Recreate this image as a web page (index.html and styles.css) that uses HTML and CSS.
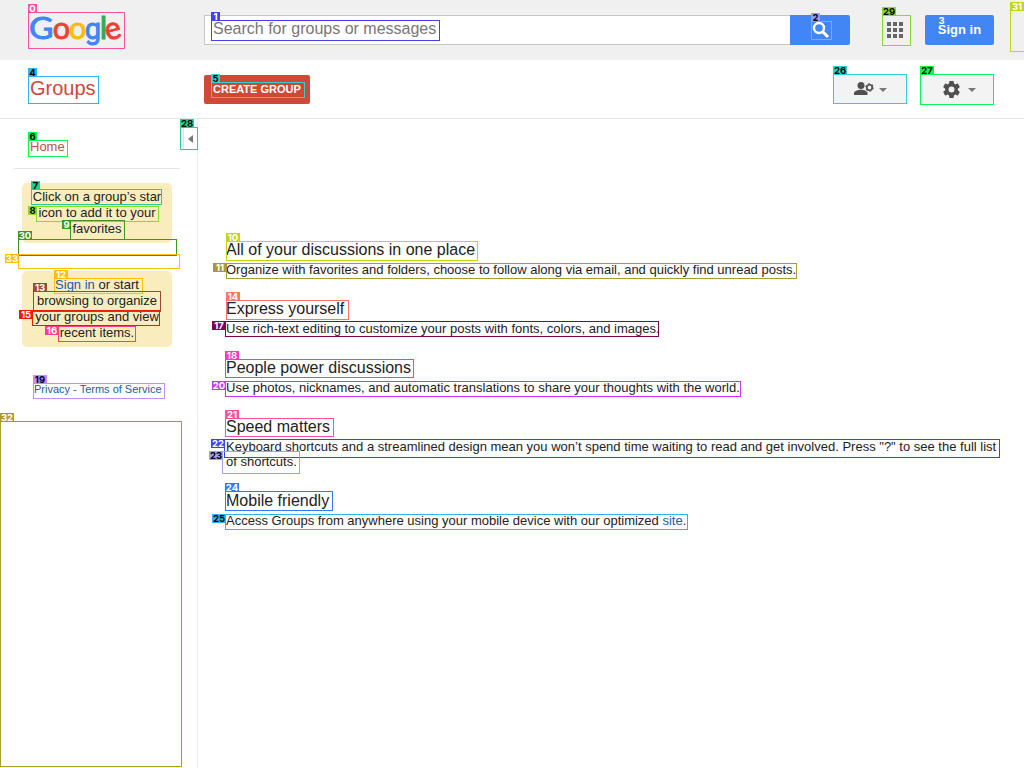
FILE: index.html
```html
<!DOCTYPE html>
<html lang="en">
<head>
<meta charset="utf-8">
<title>Google Groups</title>
<link rel="stylesheet" href="styles.css">
</head>
<body>
<header class="header">
  <a class="logo"><svg width="96" height="36" viewBox="0 0 96 36"><g class="logo-text"><text x="0" y="26" fill="#4285f4" stroke="#4285f4" textLength="24.5" lengthAdjust="spacingAndGlyphs">G</text><text x="23.800" y="26" fill="#ea4335" stroke="#ea4335" textLength="17.400" lengthAdjust="spacingAndGlyphs">o</text><text x="39.900" y="26" fill="#fbbc05" stroke="#fbbc05" textLength="17.400" lengthAdjust="spacingAndGlyphs">o</text><text class="logo-g" x="55.800" y="26" fill="#4285f4" stroke="#4285f4">g</text><text x="70.800" y="26" fill="#34a853" stroke="#34a853">l</text><text x="76" y="26" fill="#ea4335" stroke="#ea4335" textLength="16" lengthAdjust="spacingAndGlyphs" transform="rotate(-14 84 18)">e</text></g></svg></a>
  <div class="search"><div class="search-field">Search for groups or messages</div><div class="search-button"><svg width="18" height="18" viewBox="0 0 18 18"><circle cx="7" cy="7" r="5" fill="none" stroke="#fff" stroke-width="2.4"/><path d="M10.5 10.5 16 16" stroke="#fff" stroke-width="3"/></svg></div></div>
  <svg class="apps" width="16" height="16" viewBox="0 0 16 16"><path fill="#666" d="M0 0h4v4H0zM6 0h4v4H6zM12 0h4v4h-4zM0 6h4v4H0zM6 6h4v4H6zM12 6h4v4h-4zM0 12h4v4H0zM6 12h4v4H6zM12 12h4v4h-4z"/></svg>
  <a class="sign-in">Sign in</a>
</header>
<div class="toolbar">
  <div class="product">Groups</div>
  <div class="create">CREATE GROUP</div>
  <div class="tool members"><svg width="20" height="14" viewBox="0 0 20 14"><circle cx="7" cy="3.5" r="3.5" fill="#505050"/><path d="M0 13v-2c0-2 4-3.3 7-3.3s6.500 1.300 6.500 3.300v2z" fill="#505050"/><circle cx="15.500" cy="5.500" r="2.700" fill="none" stroke="#505050" stroke-width="1.600"/><circle cx="15.500" cy="5.500" r="3.600" fill="none" stroke="#505050" stroke-width="1.200" stroke-dasharray="1.900 1.870"/></svg><i class="caret"></i></div>
  <div class="tool settings"><svg width="17" height="17" viewBox="2 2 20 20"><path fill="#505050" d="M19.430 12.980c.04-.32.07-.64.07-.98s-.03-.66-.07-.98l2.110-1.650c.19-.15.24-.42.12-.64l-2-3.460c-.12-.22-.39-.3-.61-.22l-2.490 1c-.52-.4-1.080-.73-1.690-.98l-.38-2.650C14.460 2.180 14.250 2 14 2h-4c-.25 0-.46.18-.49.42l-.38 2.650c-.61.25-1.170.59-1.690.98l-2.490-1c-.23-.09-.49 0-.61.22l-2 3.460c-.13.22-.07.49.12.64l2.110 1.650c-.04.32-.07.65-.07.98s.03.66.07.98l-2.110 1.650c-.19.15-.24.42-.12.64l2 3.460c.12.22.39.3.61.22l2.490-1c.52.4 1.080.73 1.690.98l.38 2.650c.03.24.24.42.49.42h4c.25 0 .46-.18.49-.42l.38-2.650c.61-.25 1.170-.59 1.690-.98l2.490 1c.23.09.49 0 .61-.22l2-3.460c.12-.22.07-.49-.12-.64zM12 15.500a3.500 3.500 0 1 1 0-7 3.500 3.500 0 0 1 0 7z"/></svg><i class="caret"></i></div>
</div>
<div class="body">
  <nav class="sidebar">
    <div class="collapse"><svg width="5" height="8" viewBox="0 0 5 8"><path d="M5 0v8L0 4z" fill="#777"/></svg></div>
    <a class="home">Home</a>
    <div class="tip">Click on a group’s star<br>icon to add it to your<br>favorites</div>
    <div class="tip tip-recent"><a>Sign in</a> or start<br>browsing to organize<br>your groups and view<br>recent items.</div>
    <div class="legal"><a>Privacy</a> - <a>Terms of Service</a></div>
  </nav>
  <main class="content">
    <section><h2>All of your discussions in one place</h2><p>Organize with favorites and folders, choose to follow along via email, and quickly find unread posts.</p></section>
    <section><h2>Express yourself</h2><p>Use rich-text editing to customize your posts with fonts, colors, and images.</p></section>
    <section><h2>People power discussions</h2><p>Use photos, nicknames, and automatic translations to share your thoughts with the world.</p></section>
    <section><h2>Speed matters</h2><p>Keyboard shortcuts and a streamlined design mean you won’t spend time waiting to read and get involved. Press "?" to see the full list<br>of shortcuts.</p></section>
    <section><h2>Mobile friendly</h2><p>Access Groups from anywhere using your mobile device with our optimized <a>site</a>.</p></section>
  </main>
</div>
<div class="marks">
  <div class="mark m0"><b>0</b></div>
  <div class="mark m1"><b>1</b></div>
  <div class="mark m2 dark"><b>2</b></div>
  <div class="mark m3"><b>3</b></div>
  <div class="mark m4 dark"><b>4</b></div>
  <div class="mark m5 dark"><b>5</b></div>
  <div class="mark m6 dark"><b>6</b></div>
  <div class="mark m7 dark"><b>7</b></div>
  <div class="mark m8 dark side"><b>8</b></div>
  <div class="mark m9 side"><b>9</b></div>
  <div class="mark two m10"><b>10</b></div>
  <div class="mark two m11 side"><b>11</b></div>
  <div class="mark two m12"><b>12</b></div>
  <div class="mark two m13"><b>13</b></div>
  <div class="mark two m14"><b>14</b></div>
  <div class="mark two m15 side"><b>15</b></div>
  <div class="mark two m16 side"><b>16</b></div>
  <div class="mark two m17 side"><b>17</b></div>
  <div class="mark two m18"><b>18</b></div>
  <div class="mark two m19 dark"><b>19</b></div>
  <div class="mark two m20 side"><b>20</b></div>
  <div class="mark two m21"><b>21</b></div>
  <div class="mark two m22 side"><b>22</b></div>
  <div class="mark two m23 dark side"><b>23</b></div>
  <div class="mark two m24"><b>24</b></div>
  <div class="mark two m25 dark side"><b>25</b></div>
  <div class="mark two m26 dark"><b>26</b></div>
  <div class="mark two m27 dark"><b>27</b></div>
  <div class="mark two m28 dark"><b>28</b></div>
  <div class="mark two m29 dark"><b>29</b></div>
  <div class="mark two m30"><b>30</b></div>
  <div class="mark two m31"><b>31</b></div>
  <div class="mark two m32"><b>32</b></div>
  <div class="mark two m33 side"><b>33</b></div>
</div>
</body>
</html>
```
FILE: styles.css
```css
* { box-sizing: border-box; }
body { margin: 0; width: 1024px; height: 768px; overflow: hidden; position: relative; background: #fff; color: #222; font: 13px/15px "Liberation Sans", Arial, sans-serif; display: flex; flex-direction: column; }
a { color: #245aa8; }
svg { display: block; flex: none; overflow: visible; }

.header { height: 60px; flex: none; background: #f0f0f0; display: flex; align-items: flex-start; padding-top: 15px; }
.logo { margin: -2px 79px 0 29px; }
.logo-text { font-family: Lato, sans-serif; font-size: 31.5px; font-weight: 400; stroke-width: .9px; }
.logo-g { font-family: Roboto, sans-serif; font-size: 29px; }
.search { display: flex; width: 646px; height: 30px; }
.search-field { width: 586px; background: #fff; border: 1px solid #c6c6c6; border-right: 0; padding: 0 8px; font-size: 16px; line-height: 25px; color: #777; }
.search-button { width: 60px; background: #4285f4; border-radius: 0 2px 2px 0; padding: 6px 0 0 22px; }
.apps { margin: 7px 22px 0 37px; }
.sign-in { width: 69px; height: 30px; background: #4285f4; border-radius: 2px; color: #fff; font-weight: bold; line-height: 29px; text-align: center; }

.toolbar { height: 59px; flex: none; display: flex; align-items: flex-start; border-bottom: 1px solid #e8e8e8; padding: 14px 30px 0; }
.product { width: 174px; color: #c8493c; font-size: 20px; line-height: 28px; }
.create { width: 106px; height: 29px; margin: 1px 523px 0 0; background: #d14836; border-radius: 2px; color: #fff; font-weight: bold; font-size: 11px; line-height: 28px; padding-left: 9px; }
.tool { width: 74px; height: 30px; background: #f3f3f3; display: flex; align-items: center; }
.members { padding-left: 21px; gap: 5px; margin-right: 13px; }
.settings { padding-left: 23px; gap: 8px; height: 31px; }
.caret { border: 4px solid transparent; border-top-color: #777; border-bottom: 0; margin-top: 1px; }

.body { flex: 1; display: flex; }
.sidebar { width: 198px; border-right: 1px solid #ebebeb; position: relative; display: flex; flex-direction: column; }
.collapse { position: absolute; right: 0; top: 8px; width: 14px; height: 23px; border: 1px solid #e5e5e5; border-right: 0; padding: 7px 0 0 4px; }
.home { margin: 0 17px 14px 14px; height: 50px; border-bottom: 1px solid #e5e5e5; padding: 20px 16px 0; color: #c05046; }
.tip { margin-left: 22px; width: 150px; height: 60px; background: #f9edbe; border-radius: 5px; text-align: center; line-height: 16px; padding-top: 6px; }
.tip-recent { margin-top: 28px; height: 76px; }
.legal { color: #245aa8; font-size: 11px; margin: 35px 0 0 34px; }

.content { padding: 122px 20px 0 28px; }
.content section { margin-bottom: 19px; }
.content h2 { margin: 0; font-size: 16px; line-height: 18px; font-weight: normal; }
.content p { margin: 3px 0 0; padding-bottom: 4px; white-space: nowrap; }

.marks { position: absolute; inset: 0; overflow: hidden; }
.mark { position: absolute; border: 1px solid var(--c); }
.mark b { position: absolute; left: -1px; top: -9px; height: 9px; width: 9px; background: var(--c); color: #fff; font: bold 9.5px/9px Inter, sans-serif; text-align: center; }
.two b { width: 14px; }
.side b { left: auto; right: 100%; top: -1px; }
.dark b { color: #000; }
.m0 { --c: #ff4fa0; left: 28px; top: 12px; width: 97px; height: 37px; }
.m1 { --c: #4242f0; left: 211px; top: 20px; width: 229px; height: 21px; }
.m2 { --c: #9b9bf5; left: 811px; top: 21px; width: 21px; height: 19px; }
.m3 { --c: #4283f8; left: 937px; top: 23px; width: 49px; height: 17px; }
.m3 b { background: none; top: -8px; }
.m4 { --c: #35b0f5; left: 28px; top: 76px; width: 71px; height: 28px; }
.m5 { --c: #2ed0d0; left: 211px; top: 82px; width: 94px; height: 16px; }
.m6 { --c: #0ff555; left: 28px; top: 140px; width: 40px; height: 17px; }
.m7 { --c: #20d090; left: 31px; top: 189px; width: 131px; height: 16px; }
.m8 { --c: #8ad830; left: 36px; top: 206px; width: 123px; height: 16px; }
.m9 { --c: #3f961c; left: 70px; top: 220px; width: 55px; height: 20px; }
.m10 { --c: #c2d80a; left: 226px; top: 241px; width: 252px; height: 20px; }
.m11 { --c: #ac9a30; left: 226px; top: 263px; width: 571px; height: 16px; }
.m12 { --c: #ffc000; left: 54px; top: 278px; width: 89px; height: 16px; }
.m13 { --c: #9c4a35; left: 33px; top: 291px; width: 128px; height: 21px; }
.m14 { --c: #ff7566; left: 226px; top: 300px; width: 123px; height: 20px; }
.m15 { --c: #f01800; left: 32px; top: 310px; width: 128px; height: 16px; }
.m16 { --c: #ff3c90; left: 58px; top: 326px; width: 78px; height: 16px; }
.m17 { --c: #800055; left: 225px; top: 321px; width: 434px; height: 16px; }
.m18 { --c: #ff35c8; left: 225px; top: 359px; width: 189px; height: 19px; }
.m19 { --c: #c48cff; left: 33px; top: 383px; width: 132px; height: 16px; }
.m20 { --c: #c535f5; left: 225px; top: 381px; width: 516px; height: 16px; }
.m21 { --c: #ff4fa0; left: 225px; top: 418px; width: 109px; height: 19px; }
.m22 { --c: #4040f0; left: 224px; top: 439px; width: 776px; height: 19px; }
.m23 { --c: #a0a0f8; left: 222px; top: 451px; width: 78px; height: 23px; }
.m24 { --c: #307aff; left: 225px; top: 491px; width: 108px; height: 20px; }
.m25 { --c: #35b0f5; left: 225px; top: 514px; width: 463px; height: 16px; }
.m26 { --c: #2ed0d0; left: 833px; top: 74px; width: 74px; height: 30px; }
.m27 { --c: #0ff555; left: 920px; top: 74px; width: 74px; height: 31px; }
.m28 { --c: #20d090; left: 180px; top: 127px; width: 18px; height: 23px; }
.m29 { --c: #8ad830; left: 882px; top: 15px; width: 29px; height: 31px; }
.m30 { --c: #3f961c; left: 18px; top: 239px; width: 159px; height: 17px; }
.m31 { --c: #c2d80a; left: 1010px; top: 10px; width: 20px; height: 42px; }
.m32 { --c: #ac9a30; left: 0; top: 421px; width: 182px; height: 346px; }
.m33 { --c: #ffc000; left: 18px; top: 254px; width: 162px; height: 15px; }
```
